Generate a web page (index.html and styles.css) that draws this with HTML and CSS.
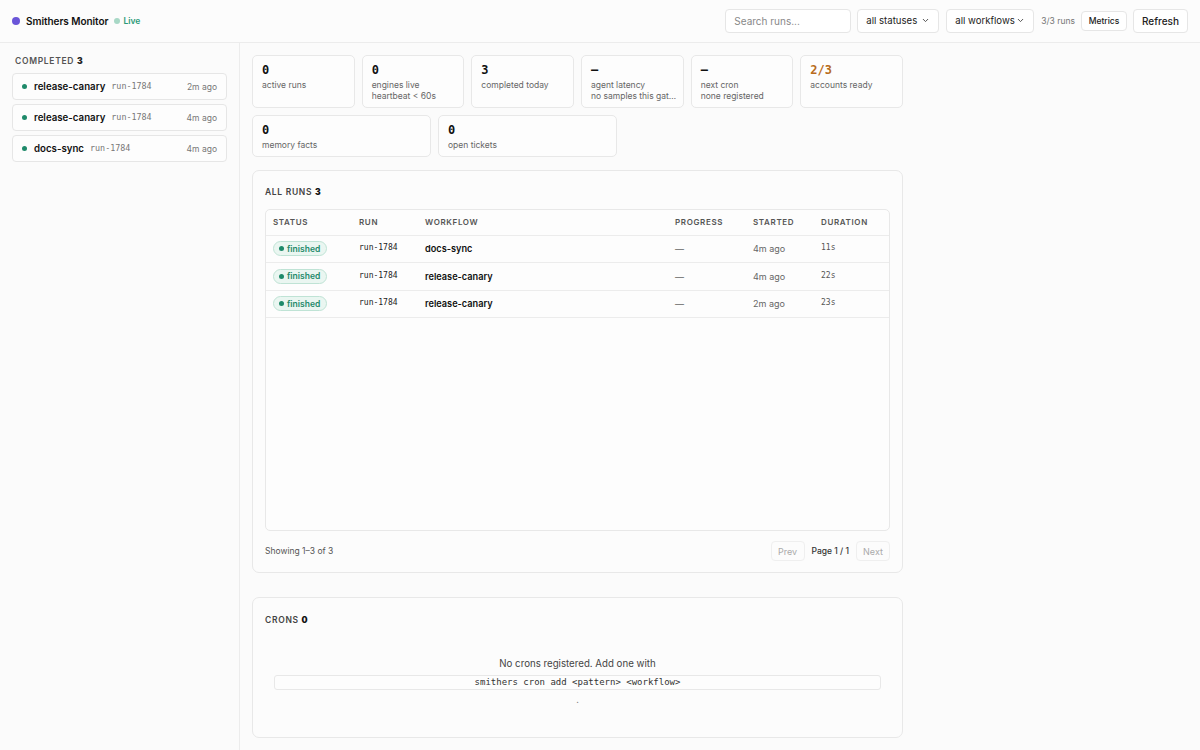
FILE: index.html
```html
<!DOCTYPE html>
<html>
<head>
<meta charset="utf-8">
<title>Smithers Monitor</title>
<link rel="stylesheet" href="styles.css">
</head>
<body>
<header class="topbar">
  <div class="brand">
    <span class="brand-dot"></span>
    <span class="brand-name">Smithers Monitor</span>
    <span class="live"><span class="live-dot"></span>Live</span>
  </div>
  <div class="controls">
    <input class="search" type="text" placeholder="Search runs...">
    <div class="select sel-status">all statuses
      <svg class="chev" width="7" height="5" viewBox="0 0 7 5"><path d="M1.2 1.3l2.3 2.3 2.3-2.3" fill="none" stroke="#555" stroke-width="1" stroke-linecap="round" stroke-linejoin="round"/></svg>
    </div>
    <div class="select sel-wf">all workflows
      <svg class="chev" width="7" height="5" viewBox="0 0 7 5"><path d="M1.2 1.3l2.3 2.3 2.3-2.3" fill="none" stroke="#555" stroke-width="1" stroke-linecap="round" stroke-linejoin="round"/></svg>
    </div>
    <span class="count">3/3 runs</span>
    <button class="btn btn-sm">Metrics</button>
    <button class="btn btn-md">Refresh</button>
  </div>
</header>
<div class="layout">
  <aside class="sidebar">
    <div class="side-title">COMPLETED <b>3</b></div>
    <div class="side-list">
      <div class="side-item"><span class="gdot"></span><span class="si-name">release-canary</span><span class="si-run">run-1784</span><span class="si-ago">2m ago</span></div>
      <div class="side-item"><span class="gdot"></span><span class="si-name">release-canary</span><span class="si-run">run-1784</span><span class="si-ago">4m ago</span></div>
      <div class="side-item"><span class="gdot"></span><span class="si-name">docs-sync</span><span class="si-run">run-1784</span><span class="si-ago">4m ago</span></div>
    </div>
  </aside>
  <main class="main">
    <div class="stats">
      <div class="stat-row six">
        <div class="card"><div class="num">0</div><div class="lbl">active runs</div></div>
        <div class="card"><div class="num">0</div><div class="lbl">engines live</div><div class="lbl">heartbeat &lt; 60s</div></div>
        <div class="card"><div class="num">3</div><div class="lbl">completed today</div></div>
        <div class="card"><div class="num">–</div><div class="lbl">agent latency</div><div class="lbl">no samples this gat…</div></div>
        <div class="card"><div class="num">–</div><div class="lbl">next cron</div><div class="lbl">none registered</div></div>
        <div class="card"><div class="num warn">2/3</div><div class="lbl">accounts ready</div></div>
      </div>
      <div class="stat-row two">
        <div class="card"><div class="num">0</div><div class="lbl">memory facts</div></div>
        <div class="card"><div class="num">0</div><div class="lbl">open tickets</div></div>
      </div>
    </div>

    <section class="panel runs">
      <div class="panel-title">ALL RUNS <b>3</b></div>
      <div class="table-box">
        <table class="runs-table">
          <thead>
            <tr><th class="c-status">STATUS</th><th class="c-run">RUN</th><th class="c-wf">WORKFLOW</th><th class="c-prog">PROGRESS</th><th class="c-start">STARTED</th><th class="c-dur">DURATION</th></tr>
          </thead>
          <tbody>
            <tr><td><span class="pill"><span class="pdot"></span>finished</span></td><td class="mono">run-1784</td><td class="wf">docs-sync</td><td class="muted">—</td><td class="muted">4m ago</td><td class="mono dur">11s</td></tr>
            <tr><td><span class="pill"><span class="pdot"></span>finished</span></td><td class="mono">run-1784</td><td class="wf">release-canary</td><td class="muted">—</td><td class="muted">4m ago</td><td class="mono dur">22s</td></tr>
            <tr><td><span class="pill"><span class="pdot"></span>finished</span></td><td class="mono">run-1784</td><td class="wf">release-canary</td><td class="muted">—</td><td class="muted">2m ago</td><td class="mono dur">23s</td></tr>
          </tbody>
        </table>
      </div>
      <div class="pager">
        <span class="showing">Showing 1–3 of 3</span>
        <div class="pager-ctl">
          <button class="pbtn">Prev</button>
          <span class="page">Page 1 / 1</span>
          <button class="pbtn">Next</button>
        </div>
      </div>
    </section>

    <section class="panel crons">
      <div class="panel-title">CRONS <b>0</b></div>
      <div class="empty">
        <div class="empty-msg">No crons registered. Add one with</div>
        <code class="cmd">smithers cron add &lt;pattern&gt; &lt;workflow&gt;</code>
        <div class="dot-end">.</div>
      </div>
    </section>
  </main>
</div>
</body>
</html>
```

FILE: styles.css
```css
* { box-sizing: border-box; }
html, body { margin: 0; padding: 0; }
body {
  font-family: Inter, "Noto Sans", "Liberation Sans", sans-serif;
  color: #111;
  background: #fbfbfb;
  width: 1200px;
  height: 750px;
  overflow: hidden;
}
.mono, .num, .cmd, .si-run { font-family: "DejaVu Sans Mono", "Liberation Mono", monospace; }

/* header */
.topbar {
  height: 43px;
  border-bottom: 1px solid #ececec;
  display: flex;
  align-items: center;
  justify-content: space-between;
  padding: 0 12px 1px 12px;
  background: #fcfcfc;
}
.brand { display: flex; align-items: center; }
.brand-dot { width: 8px; height: 8px; border-radius: 50%; background: #6a55d8; margin-right: 6px; }
.brand-name { font-size: 10px; font-weight: 600; letter-spacing: -0.05px; }
.live { display: flex; align-items: center; color: #2b9a78; font-size: 8.5px; font-weight: 600; margin-left: 6px; }
.live-dot { width: 6px; height: 6px; border-radius: 50%; background: #a8d8c6; margin-right: 3px; }

.controls { display: flex; align-items: center; }
.search {
  width: 126px; height: 24px;
  border: 1px solid #e6e6e6; border-radius: 4px;
  background: #fff;
  padding: 0 8px;
  font-family: inherit; font-size: 10px; color: #333;
  outline: none;
}
.search::placeholder { color: #888; }
.select {
  height: 24px; display: flex; align-items: center;
  border: 1px solid #e6e6e6; border-radius: 4px; background: #fff;
  font-size: 9.6px; color: #222;
  padding: 0 9px 0 8px;
  margin-left: 6px;
}
.sel-status { width: 82px; }
.sel-wf { width: 88px; margin-left: 7px; }
.chev { margin-left: auto; }
.count { font-size: 8.5px; color: #777; margin-left: 7px; }
.btn {
  font-family: inherit; background: #fff; border: 1px solid #e6e6e6; border-radius: 4px; color: #222;
  padding: 0; cursor: pointer;
}
.btn-sm { width: 46px; height: 20px; font-size: 8.5px; font-weight: 500; margin-left: 6px; }
.btn-md { width: 55px; height: 24px; font-size: 10px; font-weight: 500; margin-left: 6px; }

/* layout */
.layout { display: flex; height: 707px; }
.sidebar {
  width: 240px; flex: none;
  border-right: 1px solid #ececec;
  padding: 12px 12px;
  background: #fbfbfb;
}
.side-title { font-size: 8.5px; font-weight: 600; color: #555; letter-spacing: 0.08em; padding-left: 3px; height: 10px; line-height: 10px; margin-top: 1px; }
.side-title b { color: #222; }
.side-list { display: flex; flex-direction: column; gap: 4px; margin-top: 7px; }
.side-item {
  height: 27px; display: flex; align-items: center;
  border: 1px solid #e6e6e6; border-radius: 4px; background: #fdfdfd;
  padding: 0 9px 0 9px;
}
.gdot { width: 5px; height: 5px; border-radius: 50%; background: #1f8a6a; margin-right: 7px; flex: none; }
.si-name { font-size: 9.7px; font-weight: 600; color: #111; }
.si-run { font-size: 8.4px; color: #777; margin-left: 6px; position: relative; top: -1px; }
.si-ago { font-size: 8.5px; color: #777; margin-left: auto; }

.main { flex: 1; padding: 12px 12px; }
.main > * { width: 651px; }

/* stat cards */
.stats { display: flex; flex-direction: column; gap: 7px; }
.stat-row { display: grid; gap: 7px; }
.stat-row.six { grid-template-columns: repeat(6, 1fr); }
.stat-row.two { grid-template-columns: 179px 179px; }
.card {
  border: 1px solid #e8e8e8; border-radius: 5px; background: #fdfdfd;
  padding: 7px 9px 5px;
  min-width: 0;
}
.num { font-size: 12px; font-weight: 700; line-height: 14px; color: #111; margin-bottom: 3px; }
.num.warn { color: #b86c1c; }
.lbl { font-size: 8.5px; color: #666; line-height: 11px; white-space: nowrap; }

/* panels */
.panel {
  border: 1px solid #e8e8e8; border-radius: 7px; background: #fcfcfc;
  padding: 16px 12px 11px;
}
.runs { margin-top: 13px; }
.panel-title { font-size: 8.5px; font-weight: 600; color: #444; letter-spacing: 0.08em; line-height: 10px; }
.panel-title b { color: #111; }

.table-box {
  margin-top: 12px;
  height: 322px;
  border: 1px solid #e8e8e8; border-radius: 5px; background: #fdfdfd;
  overflow: hidden;
}
.runs-table { width: 100%; border-collapse: collapse; table-layout: fixed; }
.runs-table th {
  font-size: 8px; font-weight: 600; color: #555; letter-spacing: 0.08em; text-align: left;
  height: 25px; padding: 0 7px; border-bottom: 1px solid #ececec;
}
.runs-table td {
  height: 27.5px; padding: 0 7px; border-bottom: 1px solid #ececec;
  font-size: 9px; color: #666; vertical-align: middle;
}
.c-status { width: 86px; }
.c-run { width: 66px; }
.c-wf { width: 250px; }
.c-prog { width: 78px; }
.c-start { width: 68px; }
.runs-table td.mono { font-size: 8px; color: #222; position: relative; top: -1px; }
.runs-table td.dur { color: #555; }
.runs-table td.wf { font-size: 9.2px; font-weight: 600; color: #111; }
.pill {
  display: inline-flex; align-items: center;
  height: 15px; padding: 0 6px 0 5px;
  border: 1px solid #bfe3d5; border-radius: 8px; background: #eaf6f1;
  color: #1f8a6a; font-size: 8.5px; font-weight: 600;
}
.pdot { width: 5px; height: 5px; border-radius: 50%; background: #1f8a6a; margin-right: 3px; }

.pager { display: flex; align-items: center; justify-content: space-between; margin-top: 10px; }
.showing { font-size: 8.5px; color: #555; }
.pager-ctl { display: flex; align-items: center; }
.pbtn {
  font-family: inherit; font-size: 9px; color: #aaa; background: #fcfcfc;
  border: 1px solid #efefef; border-radius: 4px; height: 20px; width: 34px; padding: 0;
}
.page { font-size: 8.5px; font-weight: 500; color: #333; margin: 0 7px; }

.crons { margin-top: 24px; height: 141px; padding-top: 17px; }
.empty { display: flex; flex-direction: column; align-items: center; margin-top: 33px; }
.empty-msg { font-size: 9.7px; color: #444; line-height: 12px; }
.cmd {
  display: block; width: calc(100% - 18px);
  margin-top: 5px; height: 15px; line-height: 13px;
  border: 1px solid #e8e8e8; border-radius: 3px; background: #fdfdfd;
  font-size: 9px; color: #333; text-align: center;
}
.dot-end { font-size: 9px; color: #888; line-height: 10px; margin-top: 5px; }
```
